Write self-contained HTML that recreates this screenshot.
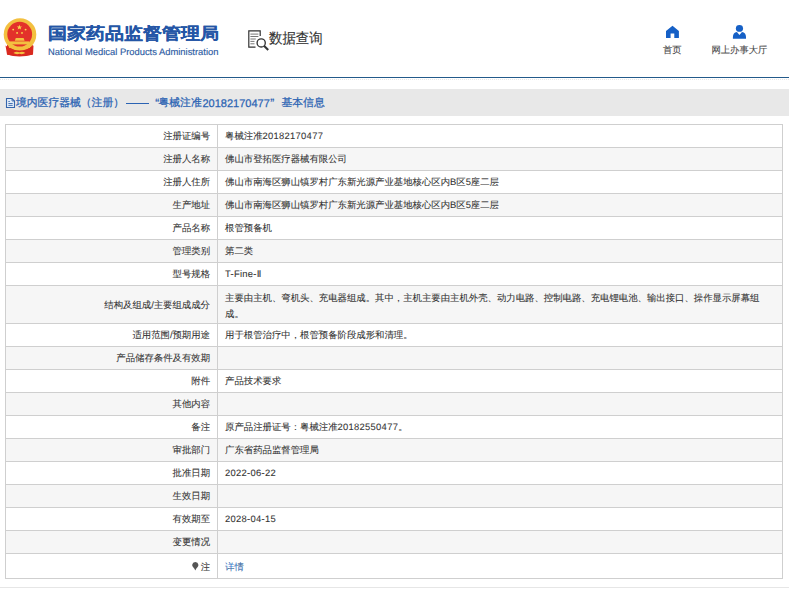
<!DOCTYPE html>
<html><head><meta charset="utf-8">
<style>
*{margin:0;padding:0;box-sizing:border-box}
html,body{text-rendering:geometricPrecision;width:789px;height:604px;overflow:hidden;background:#fff;font-family:"Liberation Sans",sans-serif;color:#333}
.abs{position:absolute}
#emblem{left:0;top:15px;width:40px;height:45px}
#t1{left:48px;top:24px;-webkit-text-stroke:0.2px #2456a6;font-size:19px;font-weight:bold;color:#2456a6;letter-spacing:0;white-space:nowrap;line-height:24px;transform:scaleY(0.87);transform-origin:0 0}
#t2{left:48px;top:45.5px;font-size:9.4px;color:#2d5ca3;-webkit-text-stroke:0.15px #2d5ca3;white-space:nowrap;line-height:12px}
#sj{left:244px;top:26px;width:30px;height:28px}
#sjt{left:269px;top:29px;transform:scaleX(0.925);transform-origin:0 0;font-size:14.5px;color:#333;-webkit-text-stroke:0.15px #333;white-space:nowrap;line-height:20px}
#home{left:660px;top:20px;width:26px;height:22px}
#homet{left:663px;top:44.3px;font-size:9.3px;color:#4a4a4a;-webkit-text-stroke:0.12px #4a4a4a;line-height:12px;white-space:nowrap}
#user{left:726px;top:20px;width:26px;height:22px}
#usert{left:711.5px;top:44.3px;font-size:9.3px;color:#4a4a4a;-webkit-text-stroke:0.12px #4a4a4a;line-height:12px;white-space:nowrap}
#bline{left:0;top:77px;width:789px;height:1px;background:#235a8a}
#dots{left:0;top:79px;width:789px;height:1px;border-top:1px dotted #e8e8e8}
#band{left:0;top:89px;width:789px;height:27px;background:#e8e8e8}
.bt{-webkit-text-stroke:0.25px #2b63b3;top:96px;font-size:10.8px;color:#2b63b3;line-height:14px;white-space:nowrap}
#doc{left:5px;top:97px;width:11px;height:12px}
table{position:absolute;left:5px;top:124px;width:778px;table-layout:fixed;border-collapse:collapse;font-size:9.4px;color:#333;-webkit-text-stroke:0.08px #333}
td{border:1px solid #cfcfcf;height:23px;padding:0.5px 0 0 0;line-height:12px;white-space:nowrap}
td.l{width:212px;text-align:right;padding-right:7px}
td.v{padding-left:7px}
tr:nth-child(even) td{background:#f6f6f6}
tr.big td{height:38px}
tr.last td{height:25px;padding-top:2px}
tr.big td.v{line-height:16px;padding-top:2px}
.n{letter-spacing:0.3px}
a{color:#3a7fd5;text-decoration:none}
#foot{left:0;top:587px;width:789px;height:1px;background:#e6e6e6}
</style></head><body>
<svg id="emblem" class="abs" viewBox="0 15 40 45">
  <path d="M7 45 L7.2 54.8 Q20 56.8 32.6 54.8 L32.8 45 Z" fill="#d9291f"/>
  <circle cx="20" cy="34.6" r="16.3" fill="#f3c040"/>
  <circle cx="19.7" cy="34.2" r="12.4" fill="#e3312a"/>
  <polygon points="19.4,24.8 20.1,26.6 22,26.6 20.5,27.7 21.1,29.5 19.4,28.4 17.7,29.5 18.3,27.7 16.8,26.6 18.7,26.6" fill="#f8d64c"/>
  <circle cx="13.2" cy="29.6" r="0.95" fill="#f8d64c"/>
  <circle cx="25.6" cy="29.6" r="0.95" fill="#f8d64c"/>
  <circle cx="17.1" cy="32.9" r="0.95" fill="#f8d64c"/>
  <circle cx="22" cy="32.9" r="0.95" fill="#f8d64c"/>
  <path d="M15.8 38 H23.6 L24.6 40.8 H14.8 Z" fill="#f3c040"/>
  <rect x="9.7" y="41.4" width="19.6" height="3" fill="#f3c040"/>
  <path d="M5.5 45.5 Q12 50.5 19.5 50.5 Q27 50.5 33.5 45.5 L33 54.5 Q26 56.5 19.5 56.5 Q13 56.5 7 54.5 Z" fill="#d9291f"/>
  <path d="M9 47.5 Q14 46.5 19.5 49 Q25 46.5 30 47.5" stroke="#f3c040" stroke-width="1.2" fill="none"/>
  <path d="M13.4 53 Q16 50.8 19.4 52.2 Q22.8 50.8 25.3 53 Q22.8 54.8 19.4 53.8 Q16 54.8 13.4 53Z" fill="#f3c040"/>
</svg>
<div id="t1" class="abs">国家药品监督管理局</div>
<div id="t2" class="abs">National Medical Products Administration</div>
<svg id="sj" class="abs" viewBox="244 26 30 28">
  <path d="M255.5 47.2 H248.8 V30.9 H260.2 V35.9" stroke="#333" stroke-width="1.2" fill="none"/>
  <path d="M250.4 34.1 H258.4 M250.4 36.5 H258.4 M250.4 39 H255.8 M250.4 41.4 H254.5 M250.4 43.8 H254.5" stroke="#6a6a6a" stroke-width="0.9"/>
  <circle cx="261.2" cy="42.9" r="4.1" stroke="#333" stroke-width="1.35" fill="#fff"/>
  <path d="M264.2 46 L268.2 50" stroke="#333" stroke-width="2"/>
</svg>
<div id="sjt" class="abs">数据查询</div>
<svg id="home" class="abs" viewBox="660 20 26 22">
  <path d="M672.5 25.8 L678.9 30.9 V37.9 H674.3 V33.6 H670.6 V37.9 H666 V30.9 Z" fill="#1660c6"/>
</svg>
<div id="homet" class="abs">首页</div>
<svg id="user" class="abs" viewBox="726 20 26 22">
  <ellipse cx="739.45" cy="28.4" rx="3.6" ry="3.35" fill="#1660c6"/>
  <path d="M732.9 38.8 V37 Q733 32.6 736.9 32 L739.45 34.9 L742 32 Q745.9 32.6 746 37 V38.8 Z" fill="#1660c6"/>
</svg>
<div id="usert" class="abs">网上办事大厅</div>
<div id="bline" class="abs"></div>
<div id="dots" class="abs"></div>
<div id="band" class="abs"></div>
<svg id="doc" class="abs" viewBox="5 97 11 12">
  <path d="M6.5 98.5 H12 L14.5 101 V107.5 H6.5 Z" stroke="#3565ac" stroke-width="1.1" fill="#e2ecf8"/>
  <path d="M12 98.5 V101 H14.5" stroke="#3565ac" stroke-width="0.8" fill="none"/>
  <path d="M8.4 101.5 H9.8 M8.4 103.5 H12.7 M8.4 105.4 H12.7" stroke="#3565ac" stroke-width="0.9"/>
</svg>
<div class="abs bt" style="left:16px">境内医疗器械（注册）</div>
<div class="abs" style="left:125.5px;top:103px;width:23.5px;height:1.2px;background:#2b63b3"></div>
<div class="abs bt" style="left:155.3px;font-size:12px;top:95.5px">“</div>
<div class="abs bt" style="left:158.5px">粤械注准</div>
<div class="abs bt" style="left:202.5px;font-size:11px;top:96.5px">20182170477</div>
<div class="abs bt" style="left:270.2px;font-size:12px;top:95.5px">”</div>
<div class="abs bt" style="left:281.5px">基本信息</div>
<table>
<tr><td class="l">注册证编号</td><td class="v">粤械注准<span class="n">20182170477</span></td></tr>
<tr><td class="l">注册人名称</td><td class="v">佛山市登拓医疗器械有限公司</td></tr>
<tr><td class="l">注册人住所</td><td class="v">佛山市南海区狮山镇罗村广东新光源产业基地核心区内B区5座二层</td></tr>
<tr><td class="l">生产地址</td><td class="v">佛山市南海区狮山镇罗村广东新光源产业基地核心区内B区5座二层</td></tr>
<tr><td class="l">产品名称</td><td class="v">根管预备机</td></tr>
<tr><td class="l">管理类别</td><td class="v">第二类</td></tr>
<tr><td class="l">型号规格</td><td class="v"><span class="n">T-Fine-Ⅱ</span></td></tr>
<tr class="big"><td class="l">结构及组成/主要组成成分</td><td class="v">主要由主机、弯机头、充电器组成。其中，主机主要由主机外壳、动力电路、控制电路、充电锂电池、输出接口、操作显示屏幕组<br>成。</td></tr>
<tr><td class="l">适用范围/预期用途</td><td class="v">用于根管治疗中，根管预备阶段成形和清理。</td></tr>
<tr><td class="l">产品储存条件及有效期</td><td class="v"></td></tr>
<tr><td class="l">附件</td><td class="v">产品技术要求</td></tr>
<tr><td class="l">其他内容</td><td class="v"></td></tr>
<tr><td class="l">备注</td><td class="v">原产品注册证号：粤械注准<span class="n">20182550477</span>。</td></tr>
<tr><td class="l">审批部门</td><td class="v">广东省药品监督管理局</td></tr>
<tr><td class="l">批准日期</td><td class="v"><span class="n">2022-06-22</span></td></tr>
<tr><td class="l">生效日期</td><td class="v"></td></tr>
<tr><td class="l">有效期至</td><td class="v"><span class="n">2028-04-15</span></td></tr>
<tr><td class="l">变更情况</td><td class="v"></td></tr>
<tr class="last"><td class="l"><svg width="7" height="9" viewBox="0 0 7 9" style="vertical-align:-1px;margin-right:2px"><path d="M3.3 8.6 Q2.6 6.8 1.2 5.3 Q0 4 0.2 2.8 Q0.6 0.2 3.3 0.1 Q6 0.2 6.4 2.8 Q6.6 4 5.4 5.3 Q4 6.8 3.3 8.6Z" fill="#555"/></svg>注</td><td class="v"><a>详情</a></td></tr>
</table>
<div id="foot" class="abs"></div>
</body></html>
